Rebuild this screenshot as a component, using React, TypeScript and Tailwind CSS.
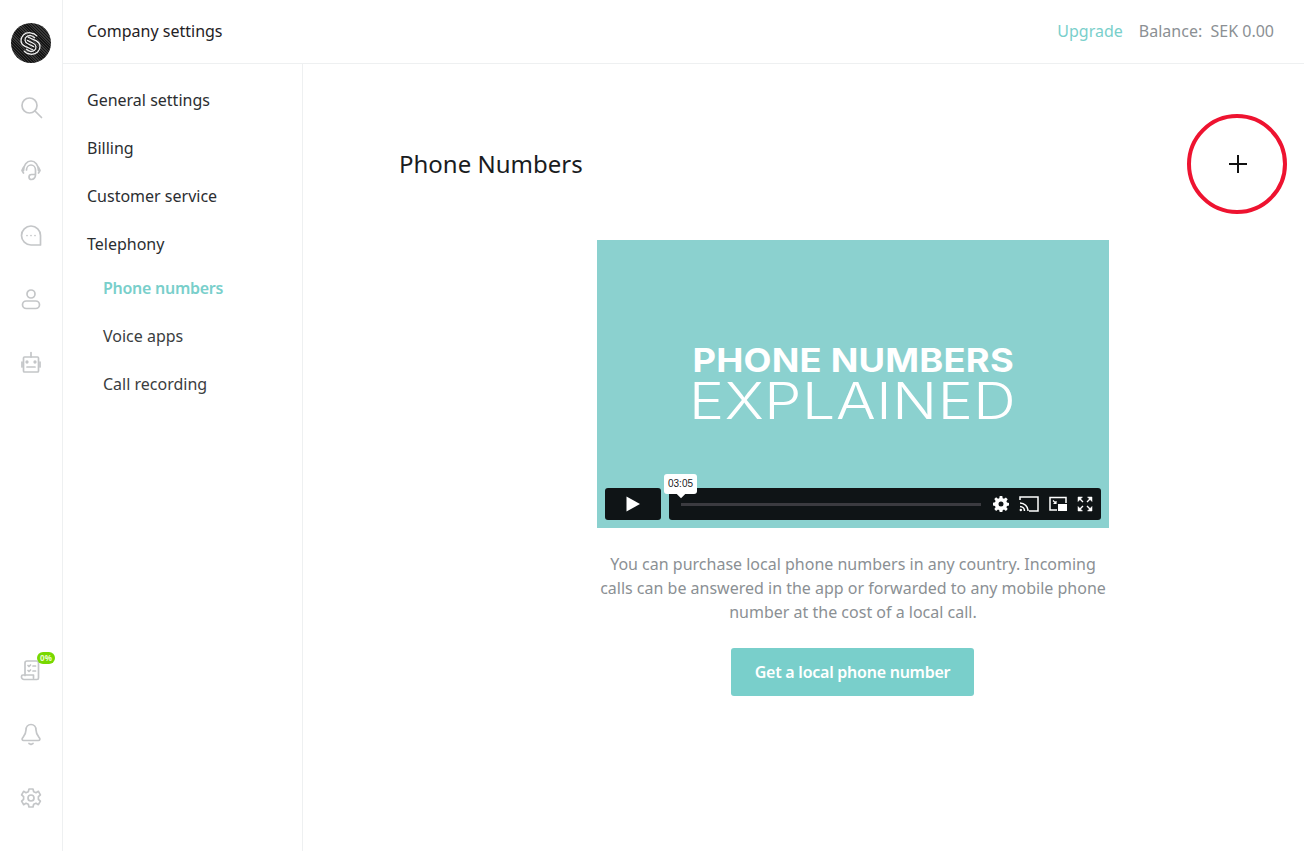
import type { ReactNode } from "react";

function RailIcon({ children }: { children: ReactNode }) {
  return (
    <div className="relative flex h-16 w-[62px] items-center justify-center">
      <svg width="24" height="24" viewBox="0 0 24 24" fill="none" stroke="#c4c6c8" strokeWidth="1.7" strokeLinecap="round" strokeLinejoin="round">
        {children}
      </svg>
    </div>
  );
}

function Logo() {
  return (
    <div className="flex h-10 w-10 items-center justify-center rounded-full bg-[repeating-linear-gradient(45deg,#141414_0,#141414_1px,#383838_1px,#383838_2px)]">
      <svg width="25" height="27" viewBox="0 0 28 30" fill="none" stroke="#f0f0f0" strokeWidth="1.4" strokeLinecap="round">
        <path d="M21 6.500C18 2.500 10 1.500 6 5.500c-4 4-3.500 10 1.500 12.500l9 4" />
        <path d="M7 23.500c3 4 11 5 15 1 4-4 3.500-10-1.500-12.500l-9-4" />
        <path d="M18.500 8.500C16 6 12 5.500 9.500 7.500c-2.500 2-2 6 1 7.500l7 3.500" />
        <path d="M9.500 21.500c2.500 2.500 6.500 3 9 1 2.500-2 2-6-1-7.500l-7-3.500" />
      </svg>
    </div>
  );
}

function SubLink({ label, active }: { label: string; active?: boolean }) {
  return (
    <div className={active ? "flex h-12 items-center pl-10 pb-1 font-semibold tracking-[-0.27px] text-[#79cfcb]" : "flex h-12 items-center pl-10 pb-1 text-[#3a3d40]"}>
      {label}
    </div>
  );
}

function NavLink({ label }: { label: string }) {
  return <div className="flex h-12 items-center pl-6 text-[#2b2e31]">{label}</div>;
}

export default function App() {
  return (
    <div className="flex h-[851px] w-[1304px] overflow-hidden bg-white font-['Noto_Sans',sans-serif] text-base text-[#222]">
      {/* icon rail */}
      <aside className="flex w-[63px] shrink-0 flex-col border-r border-[#eef0f1]">
        <div className="flex h-[85px] items-start justify-center pt-[23px] pr-px">
          <Logo />
        </div>
        <div className="-mt-[10px] flex flex-col">
          <RailIcon>
            <circle cx="10.500" cy="10.500" r="7.500" />
            <path d="M16 16l6.500 6.500" />
          </RailIcon>
          <RailIcon>
            <path d="M4.500 11.500a7.500 9.500 0 0 1 15 0" />
            <path d="M4.500 8.500L3 11.500l1.500 2.500M19.500 8.500l1.500 3-1.500 2.500" />
            <path d="M7.500 11a4.500 5 0 0 1 9 0v5a4 4.500 0 0 1-4 4.500A2.500 2.500 0 0 1 10 18a2.500 2.500 0 0 1 2.500-2.500h3" />
          </RailIcon>
          <RailIcon>
            <path d="M12 3a9.500 9.500 0 0 0 0 19h9.500v-9.500A9.500 9.500 0 0 0 12 3z" />
            <path d="M8 12.500h.01M12 12.500h.01M16 12.500h.01" />
          </RailIcon>
          <RailIcon>
            <circle cx="12" cy="7" r="4" />
            <rect x="3.500" y="14" width="17" height="7.500" rx="3.750" />
          </RailIcon>
          <RailIcon>
            <path d="M12 1.500V6" />
            <rect x="4.500" y="6" width="15" height="15" rx="1" />
            <path d="M3 11v5M21 11v5" />
            <path d="M8 16h8" />
            <circle cx="8" cy="11" r="0.800" />
            <circle cx="16" cy="11" r="0.800" />
          </RailIcon>
        </div>
        <div className="mt-auto flex flex-col pb-[21px]">
          <div className="relative">
            <RailIcon>
              <path d="M6 17.500V5a2 2 0 0 1 2-2h9.500a2 2 0 0 1 2 2v15a1.500 1.500 0 0 1-1.500 1.500H5a2.500 2.500 0 0 1-2.500-2.500v-.5a1.500 1.500 0 0 1 1.500-1.500h10.500V20" />
              <path d="M9 7.500l1 1 1.500-1.500M14 8h2.500M9 12.500l1 1 1.500-1.500M14 13h2.500" />
            </RailIcon>
            <span className="absolute left-[37px] top-[14px] flex h-3 w-[18px] items-center justify-center rounded-full bg-[#78d800] text-[8px] font-bold leading-none text-[#e8fbd0]">
              0%
            </span>
          </div>
          <RailIcon>
            <path d="M12 2.500c-3 0-5 2.500-5 5.500 0 4-1.500 5.500-3.500 8-.8 1-.3 2.500 1 2.500h15c1.300 0 1.800-1.500 1-2.500-2-2.500-3.500-4-3.500-8 0-3-2-5.500-5-5.500z" />
            <path d="M10 21.500l2 1 2-1" />
          </RailIcon>
          <RailIcon>
            <circle cx="12" cy="12" r="3" />
            <path d="M10 3h4l.7 2.700 2.300 1 2.400-1.400 2 3.500-2 1.900v2.600l2 1.900-2 3.500-2.400-1.400-2.300 1L14 21h-4l-.7-2.700-2.300-1-2.400 1.400-2-3.500 2-1.900v-2.600l-2-1.900 2-3.500L7 6.700l2.300-1L10 3z" />
          </RailIcon>
        </div>
      </aside>

      <div className="flex min-w-0 flex-1 flex-col">
        {/* top bar */}
        <header className="flex h-[64px] shrink-0 items-center justify-between border-b border-[#eef0f1] pb-[2px] pl-6 pr-[30px]">
          <span className="text-[#1f2225]">Company settings</span>
          <div className="flex items-center gap-4 text-[#8b9094]">
            <span className="text-[#79cfcb]">Upgrade</span>
            <span>Balance:&nbsp; SEK 0.00</span>
          </div>
        </header>

        <div className="flex min-h-0 flex-1">
          {/* settings nav */}
          <nav className="w-[240px] shrink-0 border-r border-[#eef0f1] pt-3">
            <NavLink label="General settings" />
            <NavLink label="Billing" />
            <NavLink label="Customer service" />
            <NavLink label="Telephony" />
            <div className="-mt-[2px]">
              <SubLink label="Phone numbers" active />
              <SubLink label="Voice apps" />
              <SubLink label="Call recording" />
            </div>
          </nav>

          {/* main */}
          <main className="relative flex-1 pl-24">
            <h1 className="flex h-[176px] items-center pt-6 text-2xl leading-8 text-[#1a1c1e]">Phone Numbers</h1>

            <div className="ml-[198px] flex w-[512px] flex-col items-center">
              <div className="relative flex h-[288px] w-[512px] flex-col items-center bg-[#8bd1cf] font-['Inter',sans-serif] text-white">
                {/* the title is part of the video poster, a wide geometric face */}
                <div className="mt-[104px] scale-x-110 text-[33px] font-bold leading-8 tracking-[0.2px]">PHONE NUMBERS</div>
                <div className="scale-x-[1.18] text-[50px] font-light leading-[50px] tracking-[0.5px]">EXPLAINED</div>

                <div className="absolute bottom-2 left-2 right-2 flex h-8 gap-2">
                  <div className="flex w-14 items-center justify-center rounded-[3px] bg-[#0f1416]">
                    <svg width="16" height="16" viewBox="0 0 16 16" fill="white">
                      <path d="M1.500 0.500L15 8 1.500 15.500z" />
                    </svg>
                  </div>
                  <div className="relative flex flex-1 items-center rounded-[3px] bg-[#0f1416] pl-3 pr-2">
                    <div className="h-[3px] w-[300px] bg-[#3b3b40]" />
                    <div className="ml-auto flex items-center gap-[10px]">
                      <svg width="16" height="16" viewBox="0 0 16 16" fill="white">
                        <path fillRule="evenodd" d="M6.700 0h2.600l.4 2.200 1.300.6 1.900-1.300 1.800 1.800-1.300 1.900.6 1.300 2 .4v2.600l-2 .4-.6 1.300 1.300 1.900-1.800 1.800-1.900-1.300-1.300.6-.4 2H6.700l-.4-2-1.300-.6-1.900 1.300-1.800-1.800 1.300-1.900-.6-1.300-2-.4V6.700l2-.4.6-1.300-1.300-1.900 1.800-1.800L5 2.800l1.300-.6.400-2.200zM8 5.500a2.500 2.500 0 1 0 0 5 2.500 2.500 0 0 0 0-5z" />
                      </svg>
                      <svg width="20" height="16" viewBox="0 0 20 16" fill="none" stroke="white" strokeWidth="1.500">
                        <path d="M1 4V1h18v14H10" />
                        <path d="M1 7a8 8 0 0 1 8 8M1 10.500a4.500 4.500 0 0 1 4.500 4.500" />
                        <circle cx="1.800" cy="14" r="1.200" fill="white" stroke="none" />
                      </svg>
                      <svg width="18" height="16" viewBox="0 0 18 16" fill="none" stroke="white" strokeWidth="1.500">
                        <path d="M8 14H1V1.500h16V7" />
                        <path d="M4 4.500l3 3M7 5v2.500H4.500" strokeWidth="1.200" />
                        <rect x="9" y="8" width="9" height="7" fill="white" stroke="none" />
                      </svg>
                      <svg width="16" height="16" viewBox="0 0 16 16" fill="white" stroke="white">
                        <path d="M1 1h4.500L1 5.500zM15 1v4.500L10.500 1zM1 15v-4.500L5.500 15zM15 15h-4.500L15 10.500z" strokeWidth="0.500" />
                        <path d="M3 3l3 3M13 3l-3 3M3 13l3-3M13 13l-3-3" strokeWidth="1.400" fill="none" />
                      </svg>
                    </div>
                    <div className="absolute -top-[14px] left-[-5px] flex h-5 w-[33px] items-center justify-center rounded-[3px] bg-white font-['Liberation_Sans',sans-serif] text-[10px] leading-none text-[#1a1c1e]">
                      03:05
                      <span className="absolute -bottom-[3px] left-[14px] h-[6px] w-[6px] rotate-45 bg-white" />
                    </div>
                  </div>
                </div>
              </div>

              <p className="mt-6 text-center leading-6 text-[#8b9094]">
                You can purchase local phone numbers in any country. Incoming calls can be answered in the app or forwarded to any mobile phone number at the cost of a local call.
              </p>

              <button className="mr-px mt-6 flex h-12 w-[243px] items-center justify-center rounded-[3px] bg-[#79cfcb] font-semibold tracking-[-0.25px] text-white">
                Get a local phone number
              </button>
            </div>

            {/* add button with the red annotation ring over it */}
            <svg className="absolute left-[924px] top-[89px]" width="22" height="22" viewBox="0 0 22 22" stroke="#111" strokeWidth="2">
              <path d="M11 2v18M2 11h18" />
            </svg>
            <div className="absolute left-[884px] top-[50px] h-[100px] w-[100px] rounded-full border-4 border-[#ee1330]" />
          </main>
        </div>
      </div>
    </div>
  );
}
